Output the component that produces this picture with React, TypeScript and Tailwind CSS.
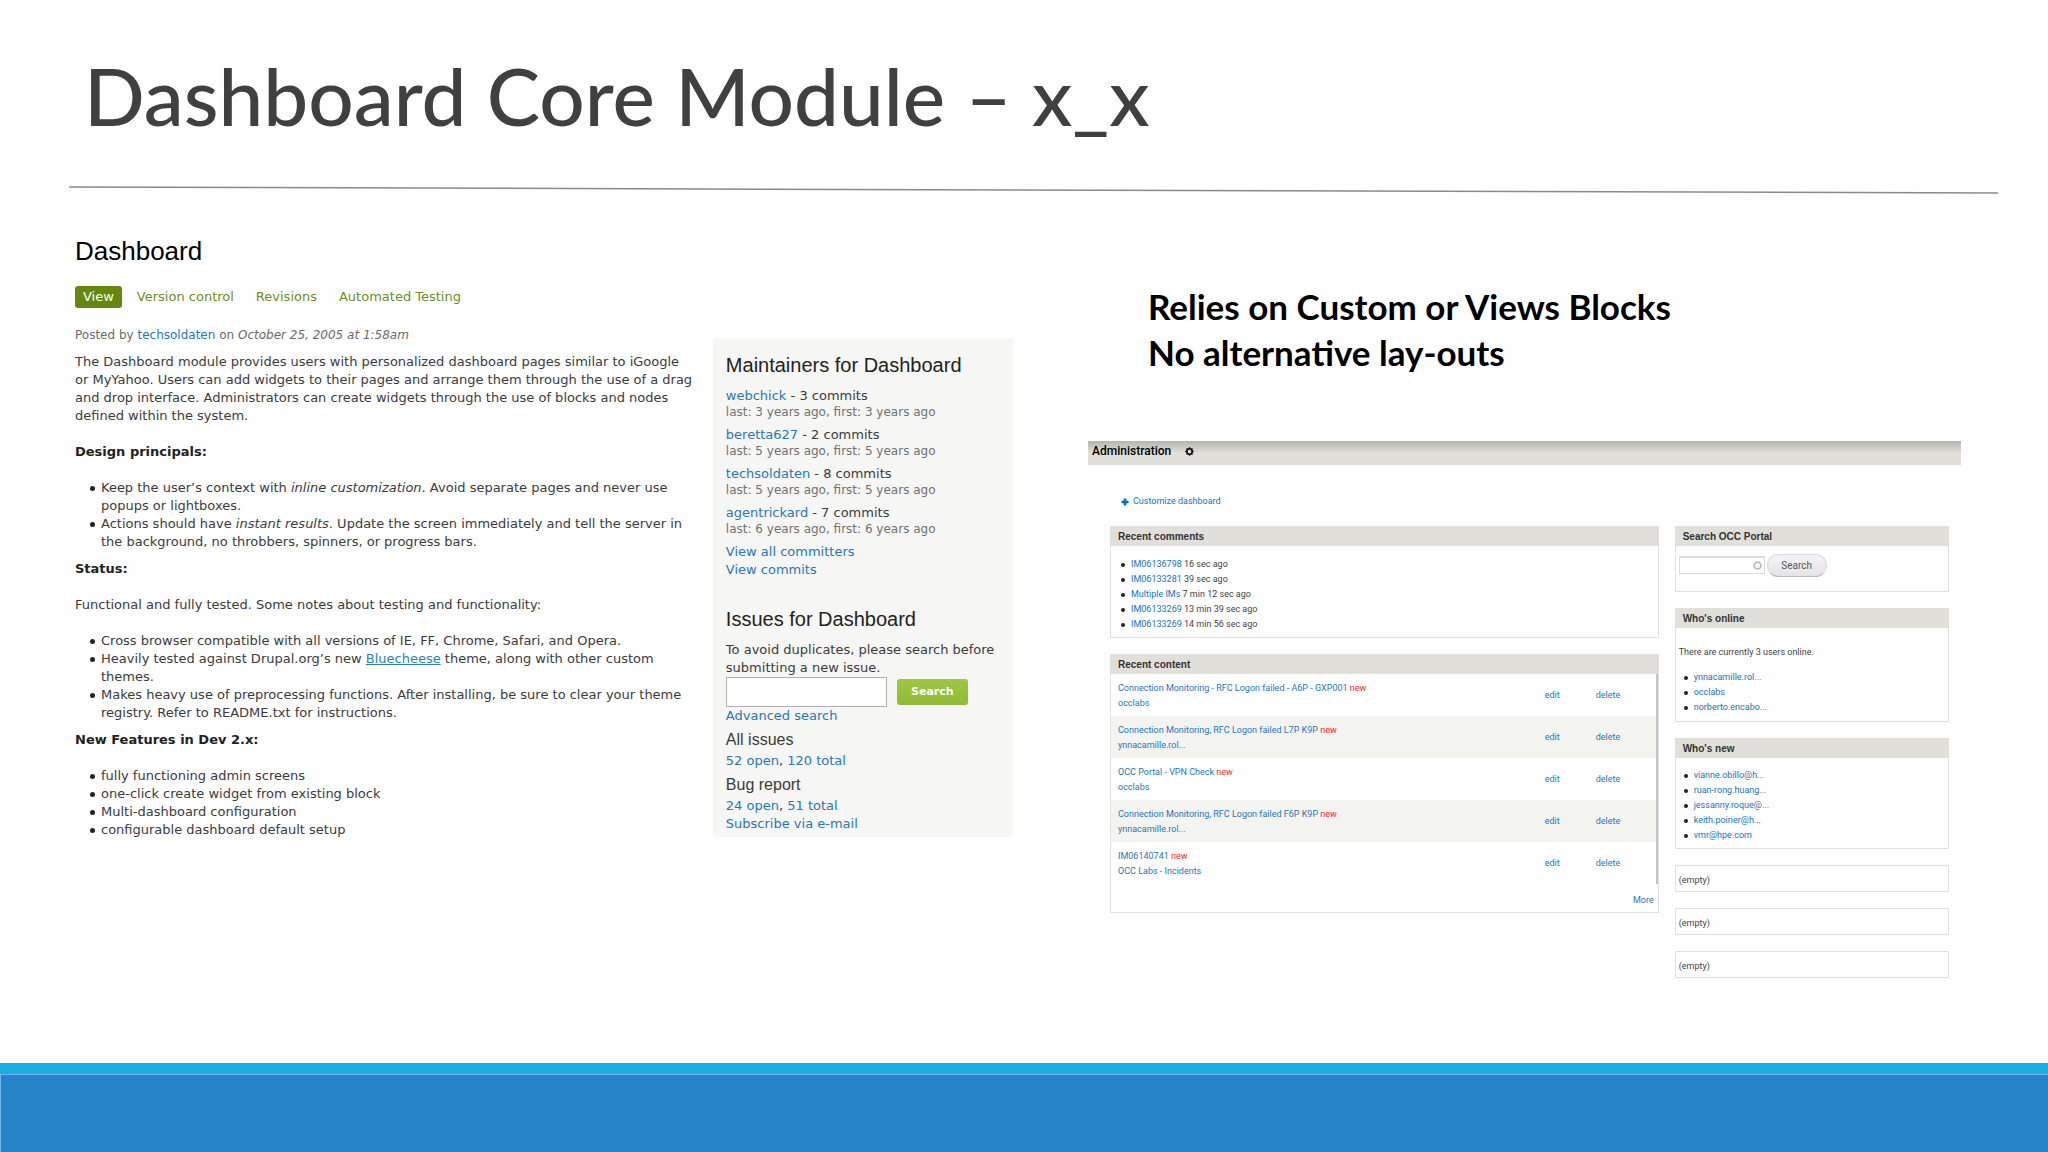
import React from "react";

const dejavu = "font-['DejaVu_Sans',sans-serif]";
const arial = "font-['Liberation_Sans',sans-serif]";
const lato = "font-['Lato',sans-serif]";
const roboto = "font-['Roboto',sans-serif]";

function Link({ children, className = "text-[#2a76b5]" }: { children: React.ReactNode; className?: string }) {
  return (
    <a href="#" className={className}>
      {children}
    </a>
  );
}

const tabs = ["Version control", "Revisions", "Automated Testing"];

const maintainers = [
  { name: "webchick", commits: 3, years: 3 },
  { name: "beretta627", commits: 2, years: 5 },
  { name: "techsoldaten", commits: 8, years: 5 },
  { name: "agentrickard", commits: 7, years: 6 },
];

const comments = [
  ["IM06136798", "16 sec ago"],
  ["IM06133281", "39 sec ago"],
  ["Multiple IMs", "7 min 12 sec ago"],
  ["IM06133269", "13 min 39 sec ago"],
  ["IM06133269", "14 min 56 sec ago"],
];

const content = [
  ["Connection Monitoring - RFC Logon failed - A6P - GXP001", "occlabs"],
  ["Connection Monitoring, RFC Logon failed L7P K9P", "ynnacamille.rol..."],
  ["OCC Portal - VPN Check", "occlabs"],
  ["Connection Monitoring, RFC Logon failed F6P K9P", "ynnacamille.rol..."],
  ["IM06140741", "OCC Labs - Incidents"],
];

const online = ["ynnacamille.rol...", "occlabs", "norberto.encabo..."];
const newest = ["vianne.obillo@h...", "ruan-rong.huang...", "jessanny.roque@...", "keith.poirier@h...", "vmr@hpe.com"];

function Bullets({ items }: { items: React.ReactNode[] }) {
  return (
    <ul>
      {items.map((item, i) => (
        <li key={i} className="relative pl-[26px] before:absolute before:left-[15px] before:top-[7px] before:size-[5px] before:rounded-full before:bg-[#222]">
          {item}
        </li>
      ))}
    </ul>
  );
}

function SmallBullets({ items, className }: { items: React.ReactNode[]; className: string }) {
  return (
    <ul className={className}>
      {items.map((item, i) => (
        <li key={i} className="relative pl-[11px] before:absolute before:left-[1px] before:top-[6px] before:size-[4px] before:rounded-full before:bg-[#222]">
          {item}
        </li>
      ))}
    </ul>
  );
}

function Box({ title, children }: { title?: string; children: React.ReactNode }) {
  return (
    <section className="border border-[#e2e0e4]">
      {title && (
        <h3 className={`${arial} -mx-px -mt-px h-[20px] bg-[#e0dfd9] pl-2 text-[10px] leading-[21px] font-bold text-[#333]`}>{title}</h3>
      )}
      {children}
    </section>
  );
}

function Article() {
  return (
    <article className={`${dejavu} min-w-0 flex-1 pr-5 text-[13px] leading-[18px] text-[#3b3b3b]`}>
      <p className="text-[12px] text-[#6b6b6b]">
        Posted by <Link>techsoldaten</Link> on <em>October 25, 2005 at 1:58am</em>
      </p>
      <p className="mt-[9px]">
        The Dashboard module provides users with personalized dashboard pages similar to iGoogle or MyYahoo. Users can
        add widgets to their pages and arrange them through the use of a drag and drop interface. Administrators can
        create widgets through the use of blocks and nodes defined within the system.
      </p>
      <h3 className="my-[18px] font-bold text-[#222]">Design principals:</h3>
      <Bullets
        items={[
          <>
            Keep the user’s context with <em>inline customization</em>. Avoid separate pages and never use popups or
            lightboxes.
          </>,
          <>
            Actions should have <em>instant results</em>. Update the screen immediately and tell the server in the
            background, no throbbers, spinners, or progress bars.
          </>,
        ]}
      />
      <h3 className="mt-[9px] mb-[18px] font-bold text-[#222]">Status:</h3>
      <p className="mb-[18px]">Functional and fully tested. Some notes about testing and functionality:</p>
      <Bullets
        items={[
          "Cross browser compatible with all versions of IE, FF, Chrome, Safari, and Opera.",
          <>
            Heavily tested against Drupal.org’s new <Link className="text-[#2a84c0] underline">Bluecheese</Link> theme,
            along with other custom themes.
          </>,
          "Makes heavy use of preprocessing functions. After installing, be sure to clear your theme registry. Refer to README.txt for instructions.",
        ]}
      />
      <h3 className="mt-[9px] mb-[18px] font-bold text-[#222]">New Features in Dev 2.x:</h3>
      <Bullets
        items={[
          "fully functioning admin screens",
          "one-click create widget from existing block",
          "Multi-dashboard configuration",
          "configurable dashboard default setup",
        ]}
      />
    </article>
  );
}

function ProjectAside() {
  return (
    <aside className={`${dejavu} mt-3 w-[32%] shrink-0 self-start rounded-[4px] bg-[#f6f6f4] px-[13px] pt-[15px] pb-1 text-[13px] leading-[18px] text-[#3b3b3b]`}>
      <h2 className={`${arial} text-[20px] leading-6 text-[#222]`}>Maintainers for Dashboard</h2>
      <ul className="mt-[10px]">
        {maintainers.map((m) => (
          <li key={m.name} className="mb-[6px]">
            <p>
              <Link>{m.name}</Link> - {m.commits} commits
            </p>
            <p className="text-[12px] leading-[15px] text-[#717171]">
              last: {m.years} years ago, first: {m.years} years ago
            </p>
          </li>
        ))}
      </ul>
      <p><Link>View all committers</Link></p>
      <p><Link>View commits</Link></p>
      <h2 className={`${arial} mt-7 mb-[10px] text-[20px] leading-6 text-[#222]`}>Issues for Dashboard</h2>
      <label htmlFor="issue-search" className="block">
        To avoid duplicates, please search before submitting a new issue.
      </label>
      <div className="flex items-center gap-[10px]">
        <input id="issue-search" type="text" className="h-[30px] w-[161px] border border-[#b0b0b0] bg-white px-1" />
        <button type="button" className="h-[26px] w-[71px] rounded-[3px] bg-[#98c13f] bg-linear-to-b from-[#9fc644] to-[#90ba36] text-[11px] font-bold text-white">
          Search
        </button>
      </div>
      <p><Link>Advanced search</Link></p>
      <h3 className={`${arial} mt-[5px] text-[16px] leading-5`}>All issues</h3>
      <p className="mt-[2px]">
        <Link>52 open</Link>, <Link>120 total</Link>
      </p>
      <h3 className={`${arial} mt-[5px] text-[16px] leading-5`}>Bug report</h3>
      <p className="mt-[2px]">
        <Link>24 open</Link>, <Link>51 total</Link>
      </p>
      <p><Link>Subscribe via e-mail</Link></p>
    </aside>
  );
}

function AdminPanel() {
  return (
    <section className={`${roboto} mt-[66px] text-[9px] leading-[15px] text-[#444]`}>
      <header className="flex h-6 items-center gap-[14px] bg-[#e0dfda] bg-linear-to-b from-[#b5b4af] to-[#e0dfda] to-50% pb-1 pl-1 text-[12px] font-medium text-black">
        Administration
        <svg viewBox="0 0 10 10" className="size-[9px]" fill="none" stroke="black" aria-hidden="true">
          <circle cx="5" cy="5" r="3" strokeWidth="1.8" />
          <path d="M5 .3v1.2M5 8.500v1.200M.3 5h1.200M8.500 5h1.200M1.700 1.700l.8.8M7.500 7.500l.8.8M8.300 1.700l-.8.8M2.500 7.500l-.8.8" strokeWidth="1.400" />
        </svg>
      </header>
      <a href="#" className="mt-[29px] ml-[33px] flex w-fit items-center gap-1 text-[#2372b8]">
        <svg viewBox="0 0 8 8" className="size-2" stroke="#0b6ab5" strokeWidth="2.600" aria-hidden="true">
          <path d="M4 0.500v7M.5 4h7" />
        </svg>
        Customize dashboard
      </a>
      <div className="mt-[17px] flex gap-4 pr-3 pl-[22px]">
        <div className="flex min-w-0 flex-[2] flex-col gap-4">
          <Box title="Recent comments">
            <SmallBullets
              className="pt-[11px] pb-[5px] pl-[9px]"
              items={comments.map(([who, ago]) => (
                <>
                  <Link className="text-[#2372b8]">{who}</Link> {ago}
                </>
              ))}
            />
          </Box>
          <Box title="Recent content">
            <table className="w-full border-r-2 border-[#c4c3c6] text-[#2a76b5]">
              <tbody>
                {content.map(([name, author], i) => (
                  <tr key={i} className="even:bg-[#f3f3f0]">
                    <td className="h-[42px] pt-[2px] pl-[7px]">
                      <p>
                        <Link>{name}</Link> <span className="text-[#f02c2c]">new</span>
                      </p>
                      <p><Link>{author}</Link></p>
                    </td>
                    <td className="w-[51px]"><Link>edit</Link></td>
                    <td className="w-[61px]"><Link>delete</Link></td>
                  </tr>
                ))}
              </tbody>
            </table>
            <p className="pt-[9px] pr-1 pb-1 text-right"><Link>More</Link></p>
          </Box>
        </div>
        <div className="flex min-w-0 flex-1 flex-col gap-4">
          <Box title="Search OCC Portal">
            <form className="flex h-[45px] items-start gap-[2px] pt-2 pl-[3px]">
              <label className="mt-[2px] flex h-[18px] w-[86px] items-center border border-t-2 border-[#dcdbde]">
                <input type="text" aria-label="Search OCC Portal" className="min-w-0 flex-1 px-1 outline-none" />
                <svg viewBox="0 0 10 10" className="mr-[2px] size-[9px]" fill="none" stroke="#bbb" strokeWidth="2" aria-hidden="true">
                  <circle cx="5" cy="5" r="3.800" />
                </svg>
              </label>
              <button type="button" className="h-[23px] w-[60px] rounded-full border border-[#dddde0] border-b-[#bbb] bg-linear-to-b from-[#f4f4f6] to-[#e4e4e8] text-[10px] text-[#555]">
                Search
              </button>
            </form>
          </Box>
          <Box title="Who's online">
            <p className="pt-[17px] pl-[3px]">There are currently 3 users online.</p>
            <SmallBullets className="pt-[10px] pb-[6px] pl-[7px]" items={online.map((n) => <Link className="text-[#2372b8]">{n}</Link>)} />
          </Box>
          <Box title="Who's new">
            <SmallBullets className="pt-[10px] pb-[5px] pl-[7px]" items={newest.map((n) => <Link className="text-[#2372b8]">{n}</Link>)} />
          </Box>
          {[0, 1, 2].map((i) => (
            <Box key={i}>
              <p className="pt-[7px] pb-[3px] pl-[3px]">(empty)</p>
            </Box>
          ))}
        </div>
      </div>
    </section>
  );
}

export default function App() {
  return (
    <div className="flex min-h-screen flex-col bg-[#fefefe]">
      <h1 className={`${lato} px-[84px] pt-[47px] text-[80px] leading-[96px] font-medium text-[#404040]`}>Dashboard Core Module – x_x</h1>
      <svg viewBox="0 0 1929 8" preserveAspectRatio="none" className="mt-[43px] mr-[50px] ml-[69px] h-2" aria-hidden="true">
        <line x1="0" y1="1" x2="1929" y2="7" stroke="#8a8a8a" strokeWidth="1.500" />
      </svg>
      <main className="grid grid-cols-[938fr_873fr] gap-[75px] pr-[87px] pl-[75px]">
        <section className="pt-[41px]">
          <h2 className={`${arial} text-[26px] leading-8 text-black`}>Dashboard</h2>
          <nav className={`${dejavu} mt-[19px] flex items-center text-[13px] leading-[22px] text-[#6c8f28]`}>
            <a href="#" className="rounded-[3px] bg-[#63870f] px-2 text-white">View</a>
            <span className="ml-[15px] flex gap-[22px]">
              {tabs.map((t) => (
                <a key={t} href="#">{t}</a>
              ))}
            </span>
          </nav>
          <div className="mt-[18px] flex">
            <Article />
            <ProjectAside />
          </div>
        </section>
        <div>
          <p className={`${lato} pt-[89px] pl-[60px] text-[35px] leading-[46px] font-bold text-black`}>
            Relies on Custom or Views Blocks
            <br />
            No alternative lay-outs
          </p>
          <AdminPanel />
        </div>
      </main>
      <footer className="mt-auto">
        <div className="h-[11px] bg-[#1cade4]" />
        <div className="h-[78px] border-t border-l border-[#6cb8e6] bg-[#2683c6]" />
      </footer>
    </div>
  );
}
